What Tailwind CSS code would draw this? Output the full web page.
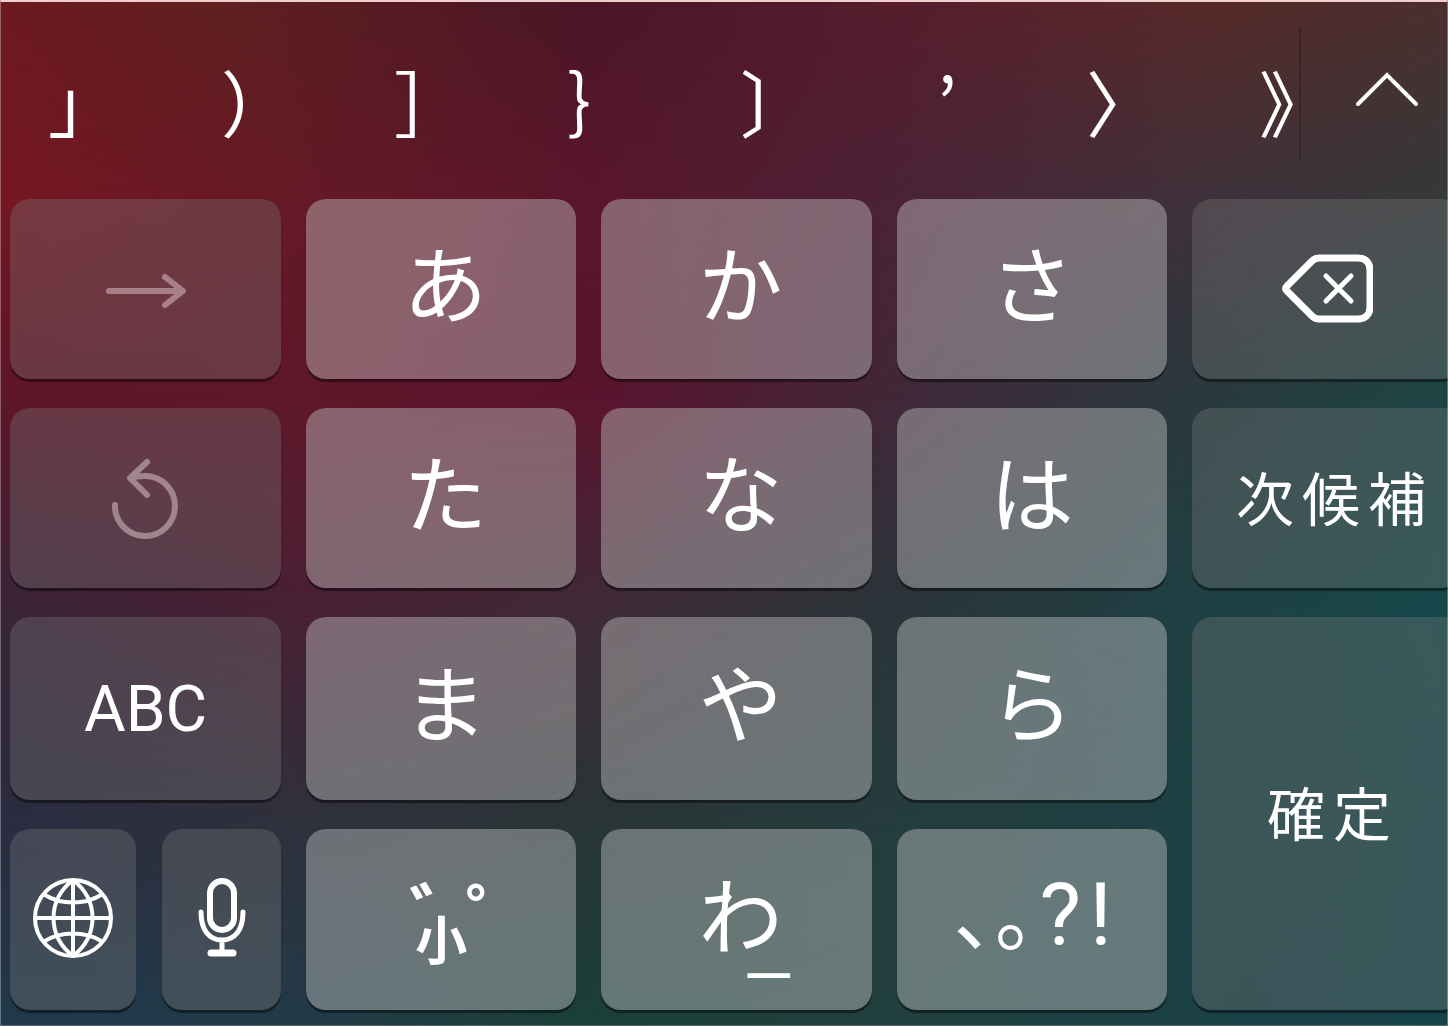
<!DOCTYPE html>
<html lang="ja">
<head>
  <meta charset="UTF-8" />
  <meta name="viewport" content="width=device-width, initial-scale=1.0"/>
  <title>かなキーボード</title>
  <script src="https://cdn.jsdelivr.net/npm/@tailwindcss/browser@4"></script>
</head>
<body class="bg-[#20343c] text-white font-['Noto_Sans_CJK_JP',sans-serif]">

  <div class="relative isolate min-h-screen flex flex-col overflow-hidden">

    <!-- Wallpaper: one colour band per row, each fading into the band below -->
    <div class="absolute inset-0 -z-10" aria-hidden="true">
      <div class="absolute inset-0 bg-[linear-gradient(to_right,#203a4c,#223a48_20%,#1a4038_41%,#22403f_61%,#1b4146_81%,#16444a)]"></div>
      <div class="absolute inset-0 bg-[linear-gradient(to_right,#2b2c40,#30303c_20%,#2a3436_41%,#263c3e_61%,#1e4044_81%,#1a464a)] mask-[linear-gradient(black_79%,transparent)]"></div>
      <div class="absolute inset-0 bg-[linear-gradient(to_right,#3a2438,#4a2034_20%,#402a36_41%,#2b3439_61%,#204044_81%,#17484b)] mask-[linear-gradient(black_59%,transparent_79%)]"></div>
      <div class="absolute inset-0 bg-[linear-gradient(to_right,#5e1629,#5e182a_20%,#5a142e_41%,#422738_61%,#2b383e_81%,#1e4545)] mask-[linear-gradient(black_39%,transparent_59%)]"></div>
      <div class="absolute inset-0 bg-[linear-gradient(to_right,#751722,#651a26_20%,#59162c_41%,#4c2236_61%,#41303a_81%,#36393a)] mask-[linear-gradient(black_19%,transparent_39%)]"></div>
      <div class="absolute inset-0 bg-[linear-gradient(to_right,#6c1a1e,#5e2020_16%,#4b1626_40%,#571d2d_62%,#572a29_84%,#4b302f)] mask-[linear-gradient(black,transparent_19%)]"></div>
    </div>
    <div class="absolute inset-0 border-t-2 border-x border-b border-x-white/30 border-b-white/25 border-t-[#f1cfce] pointer-events-none" aria-hidden="true"></div>

    <!-- Candidates -->
    <header class="h-[199px] shrink-0 flex items-start pt-[27px]">
      <nav class="flex-1 min-w-0 overflow-hidden flex pl-12 text-7xl leading-[146px]" aria-label="変換候補">
        <button class="w-[173px] shrink-0 text-left">」</button>
        <button class="w-[173px] shrink-0 text-left">）</button>
        <button class="w-[173px] shrink-0 text-left">］</button>
        <button class="w-[173px] shrink-0 text-left">｝</button>
        <button class="w-[173px] shrink-0 text-left">〕</button>
        <button class="w-[173px] shrink-0 text-left pl-6">’</button>
        <button class="w-[173px] shrink-0 text-left">〉</button>
        <button class="w-[173px] shrink-0 text-left">》</button>
      </nav>
      <div class="w-[2px] h-[134px] bg-black/20"></div>
      <button class="w-[147px] h-[134px] pl-6 pb-2 flex items-center justify-center" aria-label="候補を展開">
        <svg class="w-[64px] h-[64px]" viewBox="0 0 64 64" fill="none" stroke="currentColor" stroke-width="4" stroke-linecap="round"><path d="M3 46 32 17l29 29"/></svg>
      </button>
    </header>

    <!-- Keys -->
    <main class="flex-1 grid grid-cols-[271fr_270fr_270fr_270fr_270fr] grid-rows-[180fr_180fr_184fr_181fr] gap-x-[25px] gap-y-[29px] pl-[10px] -mr-[14px] pb-4 text-[84px] leading-none">
      <button disabled class="rounded-[20px] bg-[#808080]/32 shadow-[0_3px_1px_rgb(0_0_0/0.45)] flex items-center justify-center" aria-label="次の文字">
        <svg class="w-[80px] h-[40px] text-[#a97f89]" viewBox="0 0 80 40" fill="none" stroke="currentColor" stroke-width="6" stroke-linecap="round" stroke-linejoin="round"><path d="M3 22h73M59 8l18 14-18 14"/></svg>
      </button>
      <button class="rounded-[20px] bg-[#cdcdcd]/41 shadow-[0_3px_1px_rgb(0_0_0/0.45)] pb-4 pl-2">あ</button>
      <button class="rounded-[20px] bg-[#cdcdcd]/41 shadow-[0_3px_1px_rgb(0_0_0/0.45)] pb-4 pl-2">か</button>
      <button class="rounded-[20px] bg-[#cdcdcd]/41 shadow-[0_3px_1px_rgb(0_0_0/0.45)] pb-4">さ</button>
      <button class="rounded-[20px] bg-[#808080]/32 shadow-[0_3px_1px_rgb(0_0_0/0.45)] flex items-center justify-center" aria-label="削除">
        <svg class="w-[92px] h-[70px]" viewBox="0 0 92 70" fill="none" stroke="currentColor" stroke-linecap="round" stroke-linejoin="round"><path stroke-width="7" d="M38 4h39c8 0 12 5 12 12v37c0 8-5 12-12 12H38c-3 0-5-1-7-3L6 37c-2-2-2-3 0-5L31 7c2-2 4-3 7-3Z"/><path stroke-width="5" d="m45 22 25 25M70 22 45 47"/></svg>
      </button>

      <button disabled class="rounded-[20px] bg-[#808080]/32 shadow-[0_3px_1px_rgb(0_0_0/0.45)] flex items-center justify-center" aria-label="元に戻す">
        <svg class="w-[68px] h-[82px] text-[#a08490]" viewBox="0 0 68 82" fill="none" stroke="currentColor" stroke-width="6" stroke-linecap="round" stroke-linejoin="round"><path d="M3 48a30 30 0 1 0 30-29c-5 0-10 0-14 2"/><path d="M35 5 18 21l17 17"/></svg>
      </button>
      <button class="rounded-[20px] bg-[#cdcdcd]/41 shadow-[0_3px_1px_rgb(0_0_0/0.45)] pb-4 pl-2">た</button>
      <button class="rounded-[20px] bg-[#cdcdcd]/41 shadow-[0_3px_1px_rgb(0_0_0/0.45)] pb-4 pl-2">な</button>
      <button class="rounded-[20px] bg-[#cdcdcd]/41 shadow-[0_3px_1px_rgb(0_0_0/0.45)] pb-4">は</button>
      <button class="rounded-[20px] bg-[#808080]/32 shadow-[0_3px_1px_rgb(0_0_0/0.45)] flex items-center justify-center gap-2 pl-2 pb-1 text-[58px]" aria-label="次候補">
        <span>次</span><span>候</span><span>補</span>
      </button>

      <button class="rounded-[20px] bg-[#808080]/32 shadow-[0_3px_1px_rgb(0_0_0/0.45)] pt-1 text-[64px] font-['Roboto',sans-serif]">ABC</button>
      <button class="rounded-[20px] bg-[#cdcdcd]/41 shadow-[0_3px_1px_rgb(0_0_0/0.45)] pb-4 pl-2">ま</button>
      <button class="rounded-[20px] bg-[#cdcdcd]/41 shadow-[0_3px_1px_rgb(0_0_0/0.45)] pb-4 pl-2">や</button>
      <button class="rounded-[20px] bg-[#cdcdcd]/41 shadow-[0_3px_1px_rgb(0_0_0/0.45)] pb-4">ら</button>
      <button class="row-span-2 rounded-[20px] bg-[#808080]/32 shadow-[0_3px_1px_rgb(0_0_0/0.45)] flex items-center justify-center gap-2 pl-1 pb-1 text-[58px]" aria-label="確定">
        <span>確</span><span>定</span>
      </button>

      <div class="flex gap-[26px]">
        <button class="grow-126 basis-0 rounded-[20px] bg-[#808080]/32 shadow-[0_3px_1px_rgb(0_0_0/0.45)] pb-1 flex items-center justify-center" aria-label="キーボードを切り替え">
          <svg class="w-[80px] h-[80px]" viewBox="0 0 80 80" fill="none" stroke="currentColor" stroke-width="4"><circle cx="40" cy="40" r="38"/><path d="M40 2v76M2 40h76M40 2C14 22 14 58 40 78M40 2c26 20 26 56 0 76M12 17c16 10 40 10 56 0M12 63c16-10 40-10 56 0"/></svg>
        </button>
        <button class="grow-119 basis-0 rounded-[20px] bg-[#808080]/32 shadow-[0_3px_1px_rgb(0_0_0/0.45)] pb-1 flex items-center justify-center" aria-label="音声入力">
          <svg class="w-[50px] h-[80px]" viewBox="0 0 50 80" fill="none" stroke="currentColor" stroke-linecap="round"><rect x="13" y="3" width="24" height="49" rx="12" stroke-width="6"/><path stroke-width="5" d="M4 34c0 18 8 28 21 28s21-10 21-28M25 62v12"/><path stroke-width="7" d="M14 75h22"/></svg>
        </button>
      </div>
      <button class="rounded-[20px] bg-[#cdcdcd]/41 shadow-[0_3px_1px_rgb(0_0_0/0.45)] flex flex-col items-center justify-center font-bold" aria-label="濁点・半濁点・小文字">
        <span class="flex h-9 pl-12 text-[72px] leading-none"><span class="w-14">゛</span><span class="w-14">゜</span></span>
        <span class="text-[52px] leading-none">小</span>
      </button>
      <button class="rounded-[20px] bg-[#cdcdcd]/41 shadow-[0_3px_1px_rgb(0_0_0/0.45)] pb-4 pl-2">
        <span class="relative">わ<span class="absolute left-[48px] top-[41px] text-[80px]">_</span></span>
      </button>
      <button class="rounded-[20px] bg-[#cdcdcd]/41 shadow-[0_3px_1px_rgb(0_0_0/0.45)] flex items-baseline justify-center pt-10 pl-1 text-[80px]" aria-label="、。?!">
        <span>､｡</span><span class="pl-1 text-[88px] leading-none font-['Roboto',sans-serif]">?</span><span class="pl-2 text-[88px] leading-none font-['Roboto',sans-serif]">!</span>
      </button>
    </main>

  </div>

</body>
</html>
